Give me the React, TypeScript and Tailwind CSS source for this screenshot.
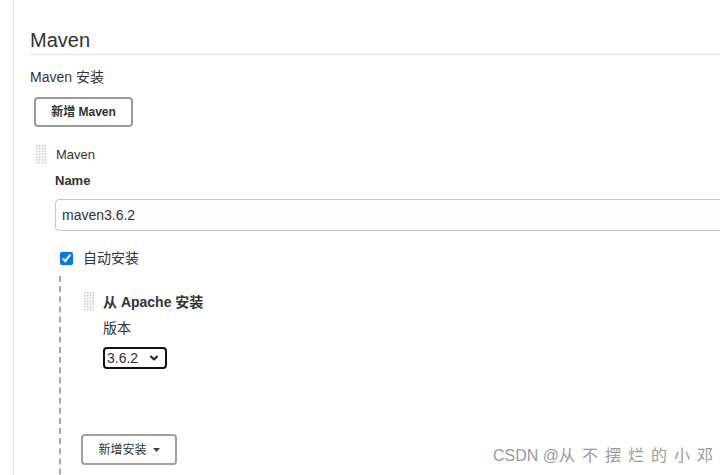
import { ChevronDown } from 'lucide-react';

function Grip({ rows = 7 }: { rows?: number }) {
  const dots = [];
  for (let r = 0; r < rows; r++) {
    for (let c = 0; c < 4; c++) {
      dots.push(<rect key={`${r}-${c}`} x={c * 2.8} y={r * 2.8} width="1.6" height="1.6" fill="#cdcdcd" />);
    }
  }
  return (
    <svg width="11" height={rows * 2.8} className="shrink-0">
      {dots}
    </svg>
  );
}

export default function App() {
  return (
    <div
      className="relative h-[475px] w-[720px] overflow-hidden bg-white text-[#333]"
      style={{ fontFamily: '"Liberation Sans", "Noto Sans CJK SC", sans-serif' }}
    >
      <div className="ml-[13px] h-full border-l border-[#e6e6e6] pl-[16px]">
        {/* Section header */}
        <div className="pt-[28px]">
          <h2 className="h-[24px] text-[20px] leading-[24px] text-[#333]">Maven</h2>
          <div className="mt-[2px] border-b border-[#dedede]" />
        </div>

        <div className="mt-[12px] h-[20px] text-[14px] leading-[20px]">Maven 安装</div>

        <button className="mt-[10px] ml-[4px] flex h-[30px] w-[99px] items-center justify-center rounded-[4px] border-2 border-[#9a9a9a] bg-white text-[12px] font-bold text-[#333]">
          新增 Maven
        </button>

        {/* Maven installation item */}
        <div className="mt-[18px] ml-[6px] flex h-[20px] items-center gap-[9px]">
          <Grip />
          <span className="text-[13px] leading-[20px]">Maven</span>
        </div>

        <div className="ml-[25px]">
          <div className="mt-[6px] h-[20px] text-[13px] font-bold leading-[20px]">Name</div>
          <div className="mt-[8px] flex h-[32px] w-[700px] items-center rounded-[4px] border border-[#c8c8c8] bg-[#fdfdfd] px-[6px] text-[14px] text-[#333]">
            maven3.6.2
          </div>

          <div className="mt-[17px] flex h-[20px] items-center">
            <input type="checkbox" checked readOnly className="ml-[5px] h-[13px] w-[13px] accent-[#0075ff]" />
            <span className="ml-[10px] text-[14px] leading-[20px]">自动安装</span>
          </div>

          {/* Installer block */}
          <div className="mt-[8px] ml-[4px] h-[300px] border-l-2 border-dashed border-[#a8a8a8] pl-[23px] pt-[14px]">
            <div className="flex h-[24px] items-center gap-[8px]">
              <Grip />
              <span className="text-[14px] font-bold leading-[24px]">从 Apache 安装</span>
            </div>
            <div className="pl-[19px]">
              <div className="mt-[4px] h-[20px] text-[14px] leading-[20px]">版本</div>
              <div className="mt-[9px] flex h-[22px] w-[64px] items-center justify-between rounded-[4px] border-2 border-[#111] pl-[2px] pr-[5px] text-[14px]">
                <span>3.6.2</span>
                <ChevronDown size={12} strokeWidth={4} className="text-[#222]" />
              </div>
            </div>
            <button className="mt-[65px] -ml-[3px] flex h-[31px] w-[96px] items-center justify-center gap-[6px] rounded-[4px] border-2 border-[#a0a0a0] bg-white text-[12px] text-[#333]">
              新增安装
              <svg width="7" height="4" viewBox="0 0 7 4">
                <path d="M0 0h7L3.5 4z" fill="#444" />
              </svg>
            </button>
          </div>
        </div>
      </div>

      {/* Watermark */}
      <div className="pointer-events-none absolute left-[493px] top-[446px] whitespace-nowrap text-[16px] leading-[20px] text-[#9a9a9a]">
        CSDN @<span className="tracking-[7px]">从不摆烂的小邓</span>
      </div>
    </div>
  );
}
